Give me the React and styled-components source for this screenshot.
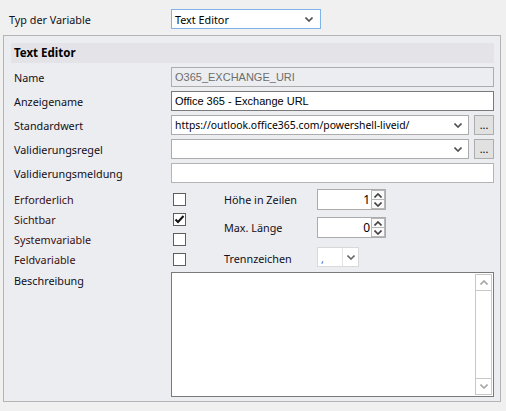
import styled, { createGlobalStyle } from "styled-components";

const GlobalStyle = createGlobalStyle`
  html, body {
    margin: 0;
    padding: 0;
    background: #f0f0f0;
  }
  body {
    font-family: "Noto Sans", "Open Sans", sans-serif;
    font-size: 10.8px;
    color: #000;
  }
  * { box-sizing: border-box; }
`;

const Chevron = ({ color = "#505050", up }) => (
  <svg width="8" height="5" viewBox="0 0 8 5">
    <polyline
      points={up ? "0.5,4.5 4,1 7.5,4.5" : "0.5,0.5 4,4 7.5,0.5"}
      fill="none"
      stroke={color}
      strokeWidth="1.6"
    />
  </svg>
);

const Check = () => (
  <svg width="11" height="11" viewBox="0 0 11 11">
    <polyline points="1.5,5.5 4,8 9.5,2" fill="none" stroke="#111" strokeWidth="2" />
  </svg>
);

export default function App() {
  return (
    <>
      <GlobalStyle />
      <Page>
        <TopRow>
          <TopLabel>Typ der Variable</TopLabel>
          <Select>
            <span>Text Editor</span>
            <Chevron />
          </Select>
        </TopRow>

        <Panel>
          <Header>Text Editor</Header>

          <FormGrid>
            <Label>Name</Label>
            <Input disabled value="O365_EXCHANGE_URI" readOnly />

            <Label>Anzeigename</Label>
            <Input $dark value="Office 365 - Exchange URL" readOnly />

            <Label>Standardwert</Label>
            <ComboRow>
              <Combo>
                <ComboText>https://outlook.office365.com/powershell-liveid/</ComboText>
                <Chevron />
              </Combo>
              <DotsButton>...</DotsButton>
            </ComboRow>

            <Label>Validierungsregel</Label>
            <ComboRow>
              <Combo>
                <ComboText />
                <Chevron />
              </Combo>
              <DotsButton>...</DotsButton>
            </ComboRow>

            <Label>Validierungsmeldung</Label>
            <Input value="" readOnly />
          </FormGrid>

          <CheckSection>
            <CheckCol>
              {[
                ["Erforderlich", false],
                ["Sichtbar", true],
                ["Systemvariable", false],
                ["Feldvariable", false],
              ].map(([name, on]) => (
                <CheckRow key={name}>
                  <CheckLabel>{name}</CheckLabel>
                  <Box>{on && <Check />}</Box>
                </CheckRow>
              ))}
            </CheckCol>

            <OptionCol>
              <OptionRow>
                <OptionLabel>Höhe in Zeilen</OptionLabel>
                <Spinner>
                  <SpinValue>1</SpinValue>
                  <SpinButtons>
                    <SpinBtn><Chevron up color="#404040" /></SpinBtn>
                    <SpinBtn><Chevron color="#404040" /></SpinBtn>
                  </SpinButtons>
                </Spinner>
              </OptionRow>
              <OptionRow $top={7}>
                <OptionLabel>Max. Länge</OptionLabel>
                <Spinner>
                  <SpinValue>0</SpinValue>
                  <SpinButtons>
                    <SpinBtn><Chevron up color="#404040" /></SpinBtn>
                    <SpinBtn><Chevron color="#404040" /></SpinBtn>
                  </SpinButtons>
                </Spinner>
              </OptionRow>
              <OptionRow $top={9}>
                <OptionLabel $shift={3}>Trennzeichen</OptionLabel>
                <SmallCombo>
                  <SmallValue>,</SmallValue>
                  <SmallArrow><Chevron color="#6a6a6a" /></SmallArrow>
                </SmallCombo>
              </OptionRow>
            </OptionCol>
          </CheckSection>

          <DescRow>
            <Label $top>Beschreibung</Label>
            <TextBox>
              <TextArea />
              <ScrollBar>
                <ScrollBtn><Chevron up color="#a8a8a8" /></ScrollBtn>
                <ScrollTrack />
                <ScrollBtn><Chevron color="#a8a8a8" /></ScrollBtn>
              </ScrollBar>
            </TextBox>
          </DescRow>
        </Panel>
      </Page>
    </>
  );
}

const Page = styled.div`
  width: 506px;
  height: 411px;
  padding: 9px 5px 0 3px;
  overflow: hidden;
`;

const TopRow = styled.div`
  display: flex;
  align-items: center;
  height: 20px;
  padding-left: 6px;
`;

const TopLabel = styled.div`
  width: 162px;
  color: #101020;
`;

const Select = styled.div`
  width: 150px;
  height: 20px;
  background: #fff;
  border: 1px solid #7eb4ea;
  display: flex;
  align-items: center;
  justify-content: space-between;
  padding: 0 7px 0 3px;
`;

const Panel = styled.div`
  margin-top: 6px;
  width: 498px;
  height: 367px;
  border: 1px solid #b4b4b4;
  background: #ecedf0;
  padding: 7px 6px 4px 7px;
  display: flex;
  flex-direction: column;
`;

const Header = styled.div`
  height: 20px;
  line-height: 20px;
  background: #e3e3e8;
  font-weight: bold;
  padding-left: 3px;
  font-size: 11.5px;
`;

const FormGrid = styled.div`
  margin-top: 4px;
  display: grid;
  grid-template-columns: 160px 1fr;
  grid-auto-rows: 20px;
  row-gap: 4px;
`;

const Label = styled.div`
  padding-left: 3px;
  display: flex;
  align-items: ${(p) => (p.$top ? "flex-start" : "center")};
  padding-top: ${(p) => (p.$top ? "1px" : "0")};
  color: #101020;
  white-space: nowrap;
`;

const Input = styled.input`
  height: 20px;
  width: 100%;
  margin: 0;
  border: 1px solid ${(p) => (p.$dark ? "#7a7a7a" : "#b4b4b4")};
  background: #fff;
  padding: 0 3px;
  font-family: "Liberation Sans", Arial, sans-serif;
  font-size: 11px;
  color: #000;
  outline: none;

  &:disabled {
    background: #ecedf0;
    color: #6d6d6d;
    border-color: #adadad;
  }
`;

const ComboRow = styled.div`
  display: flex;
  gap: 5px;
`;

const Combo = styled.div`
  flex: 1;
  height: 20px;
  background: #fff;
  border: 1px solid #acacac;
  display: flex;
  align-items: center;
  justify-content: space-between;
  padding: 0 6px 0 3px;
`;

const ComboText = styled.span`
  font-size: 10.4px;
`;

const DotsButton = styled.div`
  width: 20px;
  height: 20px;
  border: 1px solid #adadad;
  background: #e1e1e1;
  display: flex;
  align-items: flex-end;
  justify-content: center;
  padding-bottom: 3px;
  line-height: 1;
`;

const CheckSection = styled.div`
  margin-top: 6px;
  display: flex;
`;

const CheckCol = styled.div`
  width: 213px;
  display: flex;
  flex-direction: column;
`;

const CheckRow = styled.div`
  height: 20px;
  display: flex;
  align-items: center;
`;

const CheckLabel = styled.div`
  width: 162px;
  padding-left: 3px;
  color: #3a1010;
`;

const Box = styled.div`
  width: 13px;
  height: 13px;
  border: 1px solid #5e5e5e;
  background: #fff;
  display: flex;
  align-items: center;
  justify-content: center;
`;

const OptionCol = styled.div`
  display: flex;
  flex-direction: column;
`;

const OptionRow = styled.div`
  display: flex;
  align-items: center;
  margin-top: ${(p) => p.$top || 0}px;
`;

const OptionLabel = styled.div`
  width: 93px;
  padding-top: ${(p) => (p.$shift ? p.$shift : 0)}px;
  color: #101020;
`;

const Spinner = styled.div`
  width: 69px;
  height: 21px;
  border: 1px solid #ababab;
  background: #fff;
  display: flex;
`;

const SpinValue = styled.div`
  flex: 1;
  text-align: right;
  padding-right: 1px;
  line-height: 19px;
  font-size: 12px;
`;

const SpinButtons = styled.div`
  width: 14px;
  display: flex;
  flex-direction: column;
`;

const SpinBtn = styled.div`
  flex: 1;
  border: 1px solid #b8b8b8;
  background: #fafafa;
  display: flex;
  align-items: center;
  justify-content: center;
  & + & { border-top: none; }
`;

const SmallCombo = styled.div`
  width: 42px;
  height: 20px;
  border: 1px solid #d9d9d9;
  background: #fff;
  display: flex;
`;

const SmallValue = styled.div`
  width: 24px;
  padding: 3px 0 0 3px;
  color: #4a6aa8;
`;

const SmallArrow = styled.div`
  flex: 1;
  border-left: 1px solid #e4e4e4;
  display: flex;
  align-items: center;
  justify-content: center;
`;

const DescRow = styled.div`
  flex: 1;
  margin-top: 3px;
  display: grid;
  grid-template-columns: 160px 1fr;
`;

const TextBox = styled.div`
  border: 1px solid #7a7a7a;
  background: #fff;
  display: flex;
  padding: 1px;
`;

const TextArea = styled.textarea`
  flex: 1;
  border: none;
  resize: none;
  outline: none;
  font: inherit;
  background: transparent;
`;

const ScrollBar = styled.div`
  width: 17px;
  border: 1px solid #c8c8c8;
  display: flex;
  flex-direction: column;
`;

const ScrollBtn = styled.div`
  height: 16px;
  display: flex;
  align-items: center;
  justify-content: center;
  &:first-child { border-bottom: 1px solid #c8c8c8; }
  &:last-child { border-top: 1px solid #c8c8c8; }
`;

const ScrollTrack = styled.div`
  flex: 1;
`;
